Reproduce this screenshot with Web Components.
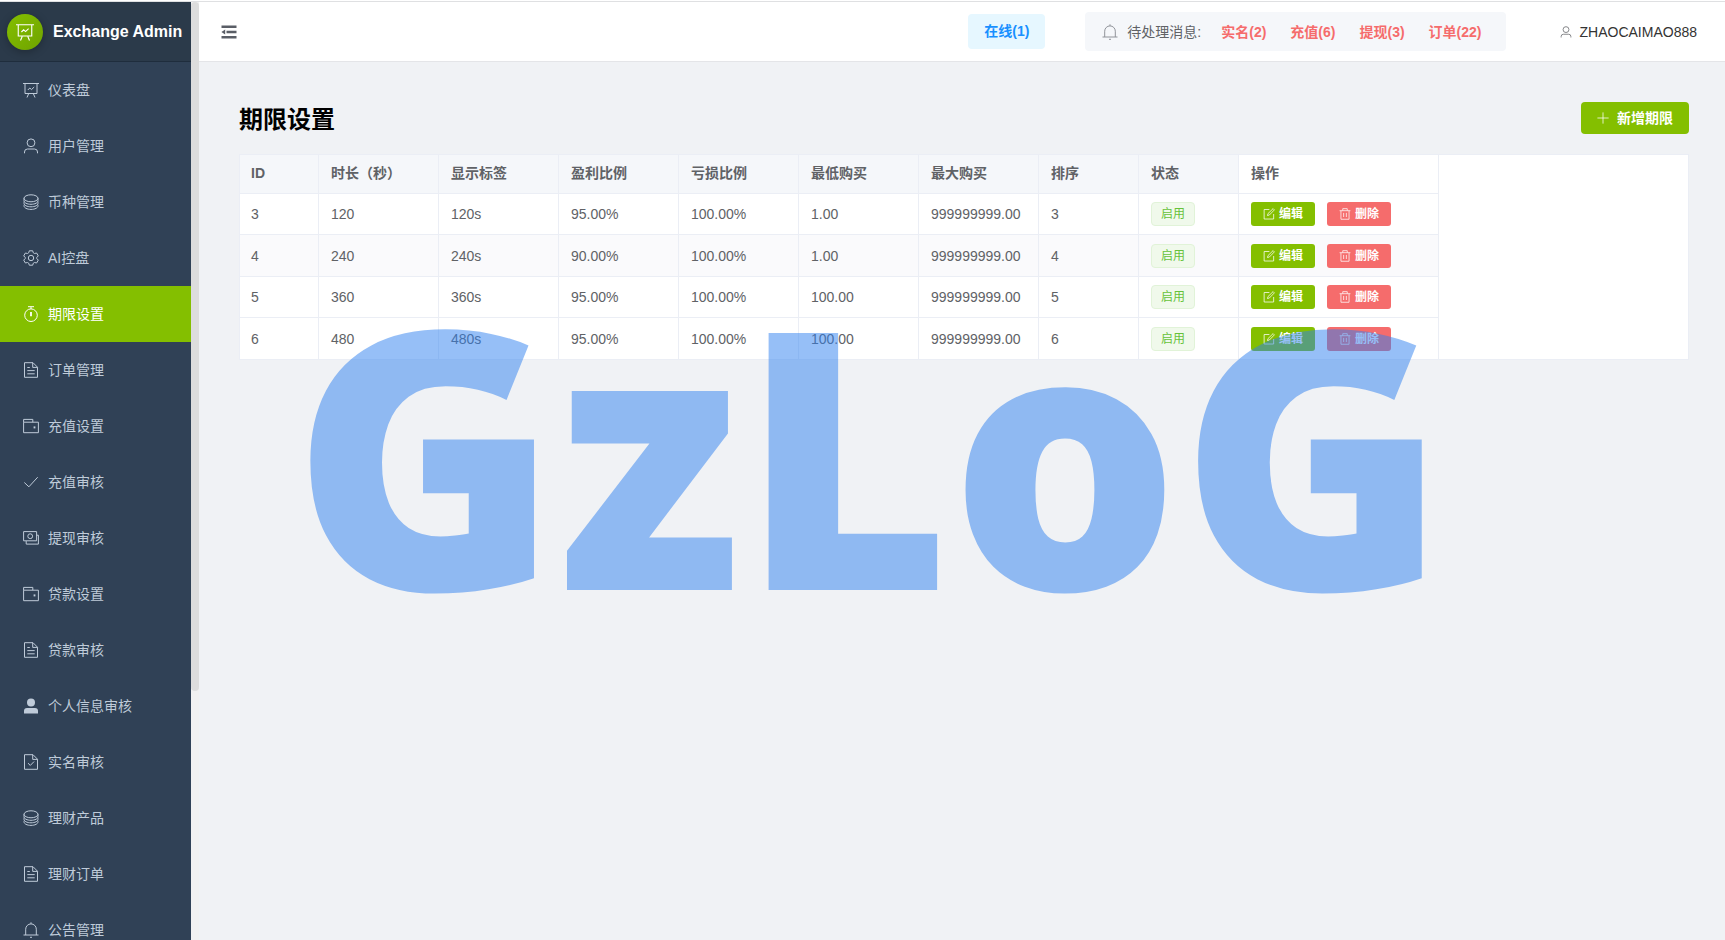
<!DOCTYPE html>
<html lang="zh-CN">
<head>
<meta charset="utf-8">
<title>Exchange Admin</title>
<style>
html, body { margin: 0; }
body { font: 14px/20px "Liberation Sans", "Noto Sans CJK SC", sans-serif; color: #606266; background: #f0f2f5; }
</style>
</head>
<body>
<admin-app></admin-app>
<script>
const ICONS = {
  board: '<path d="M0 1.500h16M2 1.500v10h12v-10M5.500 12l-1.500 3.500M10.500 12l1.500 3.500M4.800 8l2-2 1.700 1.600L11.200 5"/>',
  user: '<circle cx="8" cy="4.800" r="3.900"/><path d="M1.500 15.300v-1.300a3 3 0 0 1 3-3h7a3 3 0 0 1 3 3v1.300"/>',
  coins: '<ellipse cx="8" cy="4.300" rx="7" ry="3.500"/><path d="M1 4.300v2.400c0 2 3 3.600 7 3.600s7-1.600 7-3.600V4.300M1.300 7.500C.9 8.200 1 9 1 9.300c0 2 3 3.500 7 3.500s7-1.500 7-3.500c0-.3.100-1.100-.3-1.800M1.300 10.500c-.3.600-.3 1 -.3 1.300 0 2 3 3.600 7 3.600s7-1.600 7-3.600c0-.3 0-.7-.3-1.300"/>',
  gear: '<circle cx="8" cy="8" r="2.700"/><path d="M6.300.8h3.400l.6 2 1.200.7 2.100-.5 1.700 2.900-1.500 1.500v1.200l1.500 1.500-1.700 2.900-2.100-.5-1.200.7-.6 2H6.300l-.6-2-1.200-.7-2.100.5L.7 10.100l1.500-1.500V7.400L.7 5.900 2.400 3l2.100.5 1.200-.7z" stroke-linejoin="round"/>',
  timer: '<circle cx="8" cy="9.200" r="6.300"/><path d="M8 3V.8M5 .7h6"/><path d="M8 6v4.200" stroke-width="1.800"/>',
  doc: '<path d="M1.500.7H10l4.500 4.500v10.100h-13zM9.700.9v4.500h4.600M4.300 5.500h2.500M4.300 8.600h7.400M4.300 11.800h7.400"/>',
  wallet: '<path d="M.6 4.200h14.800v10.500H.6zM.6 4.200V1.400h9.200v2.800"/><path d="M11.500 8.400v2" stroke-width="1.800"/>',
  check: '<path d="M1.300 8.500l4.600 4.300L14.700 3.200"/>',
  money: '<path d="M.6 1.600h13v9.200H.6zM13.800 5.200h1.600v8.900H3.200v-3"/><circle cx="7.200" cy="6.200" r="2.400"/>',
  userSolid: '<g fill="currentColor" stroke="none"><circle cx="8" cy="4.600" r="4"/><path d="M1 15.400V13a3 3 0 0 1 3-3h8a3 3 0 0 1 3 3v2.400z"/></g>',
  docCheck: '<path d="M1.500.7H10l4.500 4.500v10.100h-13zM9.700.9v4.500h4.600M5 9.200l2.300 2.200 3.800-3.900"/>',
  bell: '<path d="M.5 13h15M2.700 13V7.200a5.300 5.300 0 0 1 10.600 0V13M8 1.800V.3M7 15.300h2"/>',
  plus: '<path d="M8 .5v15M.5 8h15"/>',
  edit: '<path d="M8.500 2H1.500v12.700h12.700V8M6 10l.6-2.500L13.500.8l1.700 1.700L8.400 9.400z"/>',
  trash: '<path d="M.8 3.600h14.400M5 3.400V.9h6v2.500M2.600 3.800V15h10.800V3.800M6.200 6.500v5.500M9.800 6.500v5.500"/>',
  fold: '<g fill="currentColor" stroke="none"><path d="M.5 1.600h15v2.400H.5zM5.500 6.800h10v2.400h-10zM.5 12h15v2.400H.5zM.4 8l3.800-2.500v5z"/></g>'
};

function define(name, render) {
  customElements.define(name, class extends HTMLElement {
    connectedCallback() {
      if (this.shadowRoot) return;
      const tpl = document.createElement('template');
      tpl.innerHTML = render(this);
      this.attachShadow({ mode: 'open' }).append(tpl.content.cloneNode(true));
    }
  });
}

define('ui-icon', el => `
<style>
:host { display: block; width: 16px; height: 16px; flex: none; }
svg { display: block; width: 100%; height: 100%; overflow: visible; }
</style>
<svg viewBox="0 0 16 16" fill="none" stroke="currentColor" stroke-width="1" aria-hidden="true">${ICONS[el.getAttribute('name')]}</svg>`);

define('side-item', el => `
<style>
:host { display: block; color: #bfcbd9; }
:host([active]) { background: #84bf00; color: #fff; }
a { display: flex; align-items: center; gap: 9px; height: 56px; padding-left: 23px; color: inherit; text-decoration: none; }
</style>
<a href="#"><ui-icon name="${el.getAttribute('icon')}"></ui-icon><slot></slot></a>`);

define('side-bar', () => `
<style>
:host { display: flex; height: 100%; }
aside { width: 191px; display: flex; flex-direction: column; background: #304156; overflow: hidden; }
.brand { flex: none; display: flex; align-items: center; gap: 10px; height: 59px; padding-left: 7px; background: #2b3a4a; border-bottom: 1px solid #1f2d3d; color: #fff; font-size: 16px; font-weight: bold; white-space: nowrap; }
.logo { display: grid; place-items: center; width: 36px; height: 36px; border-radius: 50%; background: linear-gradient(135deg, #84bf00, #6fa300); box-shadow: 0 2px 8px #0004; }
.logo ui-icon { width: 18px; height: 18px; }
nav { flex: 1; min-height: 0; }
.track { width: 8px; background: #f1f1f1; }
.thumb { height: 73.5%; background: #ddd; border-radius: 4px; }
</style>
<aside>
  <div class="brand"><span class="logo"><ui-icon name="board"></ui-icon></span>Exchange Admin</div>
  <nav>
    <side-item icon="board">仪表盘</side-item>
    <side-item icon="user">用户管理</side-item>
    <side-item icon="coins">币种管理</side-item>
    <side-item icon="gear">AI控盘</side-item>
    <side-item icon="timer" active>期限设置</side-item>
    <side-item icon="doc">订单管理</side-item>
    <side-item icon="wallet">充值设置</side-item>
    <side-item icon="check">充值审核</side-item>
    <side-item icon="money">提现审核</side-item>
    <side-item icon="wallet">贷款设置</side-item>
    <side-item icon="doc">贷款审核</side-item>
    <side-item icon="userSolid">个人信息审核</side-item>
    <side-item icon="docCheck">实名审核</side-item>
    <side-item icon="coins">理财产品</side-item>
    <side-item icon="doc">理财订单</side-item>
    <side-item icon="bell">公告管理</side-item>
  </nav>
</aside>
<div class="track"><div class="thumb"></div></div>`);

define('top-bar', () => `
<style>
:host { display: flex; align-items: center; height: 59px; padding: 0 28px 0 22px; background: #fff; border-bottom: 1px solid #e4e5e8; }
button { display: flex; align-items: center; border: 0; padding: 0; background: none; font: inherit; color: #333; }
.fold { color: #5a5e66; }
a { color: inherit; text-decoration: none; font-weight: bold; }
.online { margin-left: auto; padding: 0 16px; line-height: 35px; border-radius: 4px; background: #e6f7ff; color: #1890ff; }
.messages { display: flex; align-items: center; height: 39px; margin: 0 54px 0 40px; padding: 0 24px 0 17px; border-radius: 4px; background: #f5f7fa; }
.messages ui-icon { color: #909399; margin-right: 9px; }
.links { display: flex; gap: 24px; margin-left: 20px; color: #f56c6c; }
.user { gap: 8px; }
.user ui-icon { width: 12px; height: 12px; color: #606266; }
</style>
<button class="fold" aria-label="收起菜单"><ui-icon name="fold"></ui-icon></button>
<a class="online" href="#">在线(1)</a>
<div class="messages"><ui-icon name="bell"></ui-icon><span>待处理消息:</span>
  <div class="links"><a href="#">实名(2)</a><a href="#">充值(6)</a><a href="#">提现(3)</a><a href="#">订单(22)</a></div>
</div>
<button class="user"><ui-icon name="user"></ui-icon>ZHAOCAIMAO888</button>`);

define('ui-button', el => `
<style>
:host { display: inline-block; vertical-align: top; }
button { display: flex; align-items: center; gap: 8px; height: 32px; padding: 0 16px; border: 0; border-radius: 4px; background: #84bf00; color: #fff; font: inherit; font-weight: bold; }
ui-icon { width: 12px; height: 12px; }
:host([small]) button { height: 24px; gap: 4px; padding: 0 12px; border-radius: 3px; font-size: 12px; }
:host([kind="danger"]) button { background: #f56c6c; }
</style>
<button><ui-icon name="${el.getAttribute('icon')}"></ui-icon><slot></slot></button>`);

define('status-tag', () => `
<style>
:host { display: inline-block; vertical-align: top; box-sizing: border-box; height: 24px; padding: 0 9px; border: 1px solid #e1f3d8; border-radius: 4px; background: #f0f9eb; color: #67c23a; font-size: 12px; line-height: 22px; }
</style>
<slot></slot>`);

const HEADS = ['ID', '时长（秒）', '显示标签', '盈利比例', '亏损比例', '最低购买', '最大购买', '排序', '状态', '操作'];
const WIDTHS = [80, 120, 120, 120, 120, 120, 120, 100, 100, 200];
const ROWS = [
  ['3', '120', '120s', '95.00%', '100.00%', '1.00', '999999999.00', '3'],
  ['4', '240', '240s', '90.00%', '100.00%', '1.00', '999999999.00', '4'],
  ['5', '360', '360s', '95.00%', '100.00%', '100.00', '999999999.00', '5'],
  ['6', '480', '480s', '95.00%', '100.00%', '100.00', '999999999.00', '6']
];

define('period-table', () => `
<style>
:host { display: block; position: relative; background: #fff; }
:host::after { content: ""; position: absolute; inset: 0; border: 1px solid #ebeef5; pointer-events: none; }
table { table-layout: fixed; width: 1200px; border-collapse: separate; border-spacing: 0; }
th, td { box-sizing: border-box; padding: 0 0 0 12px; text-align: left; border-right: 1px solid #ebeef5; border-bottom: 1px solid #ebeef5; white-space: nowrap; }
th { height: 40px; padding-bottom: 2px; background: #f5f7fa; font-weight: bold; }
th:last-child { background: #fff; }
td { height: 41px; }
tr:nth-child(even) td { height: 42px; }
tbody tr:nth-child(2) td { background: #fafafc; }
.ops { display: flex; gap: 12px; }
</style>
<table>
  <colgroup>${WIDTHS.map(w => `<col style="width:${w}px">`).join('')}</colgroup>
  <thead><tr>${HEADS.map(h => `<th scope="col">${h}</th>`).join('')}</tr></thead>
  <tbody>${ROWS.map(r => `<tr>${r.map(c => `<td>${c}</td>`).join('')}<td><status-tag>启用</status-tag></td><td><div class="ops"><ui-button small icon="edit">编辑</ui-button><ui-button small kind="danger" icon="trash">删除</ui-button></div></td></tr>`).join('')}</tbody>
</table>`);

define('water-mark', () => `
<style>
:host { position: absolute; left: 292px; top: 324px; font: 900 360px/252px "Noto Sans", sans-serif; color: rgba(45, 127, 240, .5); white-space: nowrap; pointer-events: none; }
</style>
<slot></slot>`);

define('admin-app', () => `
<style>
:host { box-sizing: border-box; display: flex; flex-direction: column; height: 100vh; overflow: hidden; position: relative; }
.edge { flex: none; height: 1px; background: #fff; border-bottom: 1px solid #dfe0e2; }
.body { flex: 1; min-height: 0; display: flex; }
.page { flex: 1; min-width: 0; }
main { padding: 40px 36px 40px 40px; }
.title { display: flex; align-items: center; justify-content: space-between; margin-bottom: 20px; }
h1 { margin: 0; padding-top: 4px; font-size: 24px; line-height: 28px; color: #000; }
</style>
<div class="edge"></div>
<div class="body">
  <side-bar></side-bar>
  <div class="page">
    <top-bar></top-bar>
    <main>
      <div class="title"><h1>期限设置</h1><ui-button icon="plus">新增期限</ui-button></div>
      <period-table></period-table>
    </main>
  </div>
</div>
<water-mark>GzLoG</water-mark>`);
</script>
</body>
</html>
